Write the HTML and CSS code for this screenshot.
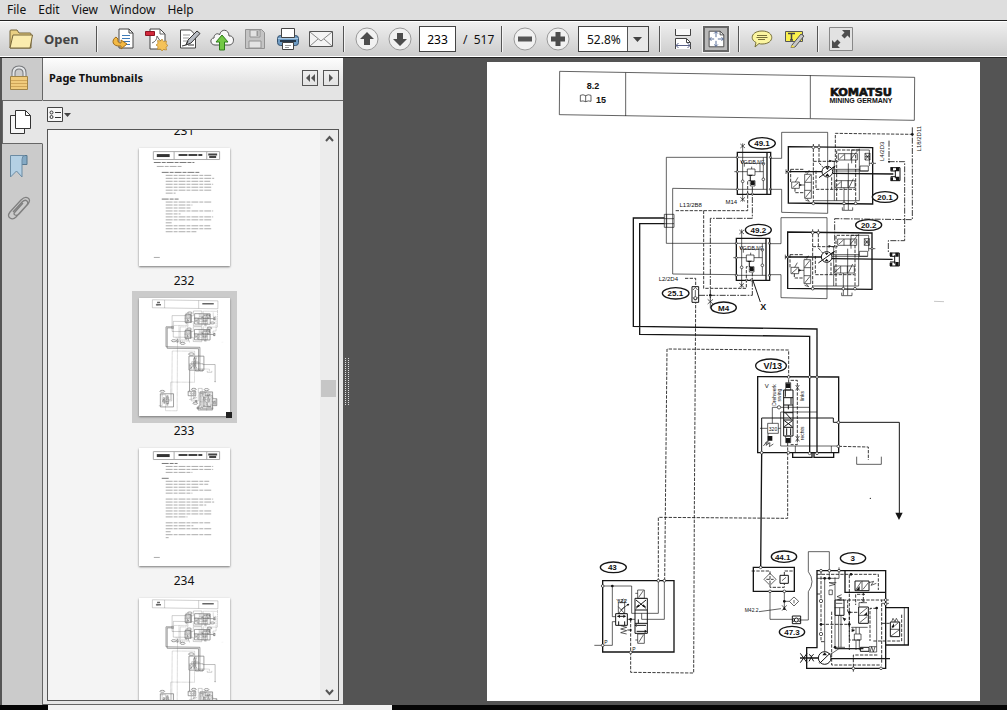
FILE: index.html
```html
<!DOCTYPE html>
<html lang="en">
<head>
<meta charset="utf-8">
<title>Document viewer</title>
<link rel="stylesheet" href="styles.css">
</head>
<body>
<div class="app">
  <nav class="menubar" aria-label="Main menu">
    <button class="menu">File</button>
    <button class="menu">Edit</button>
    <button class="menu">View</button>
    <button class="menu">Window</button>
    <button class="menu">Help</button>
  </nav>

  <header class="toolbar">
    <button class="open">
      <svg width="26" height="24" viewBox="0 0 26 24"><path d="M2 21V4q0-1 1-1h6l2 3h11q1 0 1 1v14z" fill="#e9cf83" stroke="#77663a"/><path d="M2 21 5 8h19.500L22 21z" fill="#fbecae" stroke="#77663a"/></svg>
      <span>Open</span>
    </button>
    <span class="sep"></span>
    <div class="group files">
      <button class="tool" aria-label="Convert"><svg viewBox="0 0 24 24"><path d="M8 2h10l4 4v15H8z" fill="#fff" stroke="#444"/><path d="M18 2v4h4" fill="none" stroke="#444"/><path d="M11 8.500h8M11 11.500h8M12 14.500h7M14 17.500h5" stroke="#3f7cb8"/><path d="M5 10C0 13 1 20 10 19v3l6-5-6-4v3q-4 0-3-4z" fill="#f3b944" stroke="#9c6c1c"/></svg></button>
      <button class="tool" aria-label="Create PDF"><svg viewBox="0 0 24 24"><path d="M6 2h10l5 5v15H6z" fill="#fff" stroke="#444"/><path d="M16 2v5h5M8 16q5-2 5-7 2 5 6 6" fill="none" stroke="#666"/><path d="M1.500 4.500h9v4h-9z" fill="#d2293c" stroke="#8e1422"/><path d="m18 12 1.500 2.500 3-.5-.5 3 2 1.500-2 1.500.5 3-3-.5L18 24l-1.500-2-3 .5.5-3-2-1.500 2-1.500-.5-3 3 .5z" fill="#f5c258" stroke="#b8862c" stroke-width=".7"/></svg></button>
      <button class="tool" aria-label="Sign"><svg viewBox="0 0 24 24"><path d="M3.500 3h10l5 5v13h-15z" fill="#fff" stroke="#444"/><path d="M6 8h7M6 11h6M6 14h4" stroke="#999"/><path d="m9 18 2-5L20 4l3 2.500L14 16z" fill="#b8bcc4" stroke="#333"/><path d="m5 19 4-1 2-4M11 18h6" fill="none" stroke="#333"/></svg></button>
      <button class="tool" aria-label="Upload"><svg viewBox="0 0 24 24"><path d="M5 18C0 18-.5 11 4 11 4 6 9 6 9.500 8 11 1 19 2 19 9c6-1 6 9 0 9z" fill="#f8f8f8" stroke="#555"/><path d="m12 8 6 7h-3.500v8h-5v-8H6z" fill="#72c844" stroke="#2f7c1c"/></svg></button>
      <button class="tool" aria-label="Save"><svg viewBox="0 0 24 24"><path d="M2.500 2.500h16l3 3v16h-19z" fill="#c4c4c4" stroke="#929292"/><path d="M7 3h10v7H7zM6 14h12v7H6z" fill="#e3e3e3" stroke="#929292"/><path d="M13.500 4h2v5h-2z" fill="#999"/></svg></button>
      <button class="tool" aria-label="Print"><svg viewBox="0 0 24 24"><rect x="1.500" y="8.500" width="21" height="10" rx="3" fill="#6f9cc4" stroke="#35516d"/><path d="M5.500 1.500h13v9h-13z" fill="#fff" stroke="#444"/><path d="M2 11.500h20" stroke="#a9c9e4"/><path d="M4 14h16" stroke="#26384a" stroke-width="2"/><path d="M6.500 15.500h11v7h-11z" fill="#fff" stroke="#444"/><path d="M9 18.500h6M9 20.500h4" stroke="#999"/></svg></button>
      <button class="tool" aria-label="Email"><svg viewBox="0 0 24 24"><path d="M.5 4.500h23v15H.5z" fill="#f4f4f4" stroke="#555"/><path d="m1 5 11 9L23 5M1 19l8-7M23 19l-8-7" fill="none" stroke="#888"/></svg></button>
    </div>
    <span class="sep"></span>
    <div class="group">
      <button class="tool" aria-label="Previous page"><svg viewBox="0 0 24 24"><circle cx="12" cy="12" r="11" fill="#f1f1f1" stroke="#999"/><path d="m12 5 7 7h-4v6H9v-6H5z" fill="#4d4d4d"/></svg></button>
      <button class="tool" aria-label="Next page"><svg viewBox="0 0 24 24"><circle cx="12" cy="12" r="11" fill="#f1f1f1" stroke="#999"/><path d="m12 19 7-7h-4V6H9v6H5z" fill="#4d4d4d"/></svg></button>
      <input class="pageno" aria-label="Page number" value="233">
      <span class="total">/&nbsp; 517</span>
    </div>
    <span class="sep"></span>
    <div class="group">
      <button class="tool" aria-label="Zoom out"><svg viewBox="0 0 24 24"><circle cx="12" cy="12" r="11" fill="#f1f1f1" stroke="#999"/><path d="M5 9.500h14v5H5z" fill="#555"/></svg></button>
      <button class="tool" aria-label="Zoom in"><svg viewBox="0 0 24 24"><circle cx="12" cy="12" r="11" fill="#f1f1f1" stroke="#999"/><path d="M9.500 5h5v4.500H19v5h-4.500V19h-5v-4.500H5v-5h4.500z" fill="#4d4d4d"/></svg></button>
      <div class="zoom">
        <select aria-label="Zoom level"><option>52.8%</option><option>100%</option></select>
        <svg class="zoomarrow" width="21" height="24" viewBox="0 0 21 24"><path d="M.5 0v24" stroke="#555"/><path d="M6 10h9l-4.500 5z" fill="#444"/></svg>
      </div>
    </div>
    <span class="sep"></span>
    <div class="group">
      <button class="tool" aria-label="Fit width"><svg viewBox="0 0 24 24"><path d="M4.500 2v6.500h15V2" fill="#f8f8f8" stroke="#444"/><path d="M4.500 22V11.500h11l4 4V22" fill="#fff" stroke="#444"/><path d="M15.500 11.500v4h4" fill="none" stroke="#444"/><path d="M5 18.500h14M7.500 16 5 18.500 7.500 21M16.500 16l2.500 2.500-2.500 2.500" fill="none" stroke="#5a6288"/></svg></button>
      <button class="tool pressed" aria-label="Fit page"><svg viewBox="0 0 24 24"><path d="M4.500 3.500h12l4 4v13h-16z" fill="#fff" stroke="#444"/><path d="M16.500 3.500v4h4" fill="none" stroke="#444"/><path d="M12 4v6M12 14v6M5 12h5M14 12h6M10 6l2-2 2 2M10 18l2 2 2-2M7 10l-2 2 2 2M18 10l2 2-2 2" fill="none" stroke="#4b6290"/></svg></button>
    </div>
    <span class="sep"></span>
    <div class="group">
      <button class="tool" aria-label="Comment"><svg viewBox="0 0 24 24"><path d="M12 4c13 0 13 13 0 13-1 0-2 0-3-.5L5 20l1-4.500C-1 12 2 4 12 4z" fill="#fbf5a0" stroke="#77703a"/><path d="M7 8.500h10M6.500 10.500h11M8 12.500h7" stroke="#77703a"/></svg></button>
      <button class="tool" aria-label="Highlight text"><svg viewBox="0 0 24 24"><path d="M2.500 4.500h17v10h-17z" fill="#faf04c" stroke="#555"/><path d="M5 6.500h7M8.500 7v6M7 13h3" stroke="#444" stroke-width="1.500"/><path d="M9 18 18 7l3 2-9 11-4 .5z" fill="#c7c7c7" stroke="#555"/><path d="m8 20.500 1-2.500 3 2z" fill="#fbe14a"/></svg></button>
    </div>
    <span class="sep"></span>
    <button class="tool" aria-label="Full screen"><svg viewBox="0 0 24 24"><path d="M.5.500h23v23H.5z" fill="#e2e2e2" stroke="#888"/><path d="M21 3v8l-2.500-2.500-3 3-3-3 3-3L13 3zM3 21v-8l2.500 2.500 3-3 3 3-3 3L11 21z" fill="#4d4d4d"/></svg></button>
  </header>

  <main class="workspace">
    <nav class="rail" aria-label="Panels">
      <button class="tab security" aria-label="Security"><svg width="24" height="28" viewBox="0 0 24 28"><path d="M6.500 12V8q0-5.500 5.500-5.500T17.500 8v4" fill="none" stroke="#77797c" stroke-width="4"/><path d="M6.500 12V8q0-5.500 5.500-5.500T17.500 8v4" fill="none" stroke="#e4e6e8" stroke-width="2"/><path d="M3.500 11.500h17v13h-17z" fill="#f0cb7c" stroke="#a08448"/><path d="M4 15.500h16M4 18.500h16M4 21.500h16" stroke="#cfa558"/></svg></button>
      <button class="tab active" aria-label="Page thumbnails"><svg width="24" height="26" viewBox="0 0 24 26"><path d="M2.500 6.500h14v18h-14z" fill="#f6f6f6" stroke="#333"/><path d="M7.500 1.500h10l5 5v13h-15z" fill="#fff" stroke="#333"/><path d="M17.500 1.500v5h5" fill="none" stroke="#333"/></svg></button>
      <button class="tab" aria-label="Bookmarks"><svg width="24" height="26" viewBox="0 0 24 26"><path d="M14 2.500h6v9h-6z" fill="#84a9c4" stroke="#57788f"/><path d="M3.500 2.500H18q-3 0-3 4V24l-5.500-6-6 6z" fill="#b4d0e4" stroke="#6b8ba3"/></svg></button>
      <button class="tab" aria-label="Attachments"><svg width="24" height="28" viewBox="0 0 24 28"><path d="M6 17 15 7q3-3 5-1t-1 5L9 22q-3 3-6 1t0-6L14 5q4-4 7-2t0 6l-9 10q-2 2-4 1t0-3l8-9" fill="none" stroke="#808080" stroke-width="1.300"/></svg></button>
    </nav>

    <aside class="panel">
      <div class="panelhead">
        <h2>Page Thumbnails</h2>
        <button class="mini" aria-label="Collapse"><svg width="14" height="14" viewBox="0 0 14 14"><path d="M7 3v8L3 7zM12 3v8L8 7z" fill="#555"/></svg></button>
        <button class="mini" aria-label="Expand"><svg width="14" height="14" viewBox="0 0 14 14"><path d="M5 3v8l4-4z" fill="#555"/></svg></button>
      </div>
      <div class="options">
        <button class="optbtn" aria-label="Options"><svg width="25" height="16" viewBox="0 0 25 16"><path d="M.5.500h15v14H.5z" fill="#f6f6f6" stroke="#444"/><circle cx="4.500" cy="5.500" r="1.500" fill="none" stroke="#333"/><circle cx="4.500" cy="10" r="1.500" fill="none" stroke="#333"/><path d="M8 5.500h6M8 10.500h6" stroke="#333"/><path d="M17 6h7l-3.500 4z" fill="#444"/></svg></button>
      </div>
      <div class="listbox">
        <div class="thumbs">
          <div class="caption">231</div>
          <button class="thumb">
            <svg class="sheet" viewBox="0 0 92 119">
              <path class="rule" d="M14.500 3.500h67v8h-67zM35.500 3.500v8M68.500 3.500v8"/>
              <path class="logo" d="M18 7.500h13"/>
              <path class="heavy" d="M40 7h24M70 6.500h9M71 9h7"/>
              <path class="para strong" d="M15 14.500h41M23 24.500h39M23 51.500h17"/>
              <path class="para" d="M18 18.500h26M27 27.500h47M27 30.500h49M27 33.500h45M27 36.500h48M27 39.500h47M27 42.500h46M27 45.500h10M27 54.500h46M27 57.500h27M27 60.500h26M27 63.500h48M27 66.500h15M27 69.500h48M27 72.500h47M27 75.500h6M27 78.500h45M27 81.500h46M27 84.500h31M15 110.500h6"/>
            </svg>
          </button>
          <div class="caption">232</div>
          <button class="thumb selected">
            <svg class="sheet mini-schematic" viewBox="0 0 1479 1917"><use href="#schematic"/></svg>
            <span class="marker"></span>
          </button>
          <div class="caption">233</div>
          <button class="thumb">
            <svg class="sheet" viewBox="0 0 92 119">
              <path class="rule" d="M14.500 3.500h67v8h-67zM35.500 3.500v8M68.500 3.500v8"/>
              <path class="logo" d="M18 7.500h13"/>
              <path class="heavy" d="M40 7h24M70 6.500h9M71 9h7"/>
              <path class="para strong" d="M23 15.500h16M23 30.500h7"/>
              <path class="para" d="M27 18.500h48M27 21.500h48M27 24.500h27M27 33.500h44M27 36.500h43M27 39.500h33M27 42.500h46M27 45.500h27M27 51.500h48M27 54.500h49M27 57.500h41M27 60.500h34M27 63.500h47M27 66.500h47M27 69.500h22M27 75.500h45M27 78.500h28M27 81.500h46M27 84.500h5M27 87.500h47M27 90.500h3M15 110.500h6"/>
            </svg>
          </button>
          <div class="caption">234</div>
          <button class="thumb">
            <svg class="sheet mini-schematic" viewBox="0 0 1479 1917"><use href="#schematic"/></svg>
          </button>
        </div>
        <div class="scroll">
          <button class="arrow" aria-label="Scroll up"><svg width="9" height="8" viewBox="0 0 9 8"><path d="M1 6 4.500 2 8 6" fill="none" stroke="#555" stroke-width="2"/></svg></button>
          <span class="before"></span>
          <span class="grab"></span>
          <span class="after"></span>
          <button class="arrow" aria-label="Scroll down"><svg width="9" height="8" viewBox="0 0 9 8"><path d="M1 2 4.500 6 8 2" fill="none" stroke="#555" stroke-width="2"/></svg></button>
        </div>
      </div>
    </aside>

    <div class="splitter"><svg width="4" height="48" viewBox="0 0 4 48"><path d="M.5 0v48M3.500 0v48" stroke="#ddd" stroke-dasharray="1 1"/></svg></div>

    <section class="viewer">
      <svg class="page" viewBox="0 0 1479 1917" role="img" aria-label="Hydraulic circuit diagram">
        <defs>
          <g id="block">
            <path class="bold" d="M337 97H437V223H337zM426 97V223"/>
            <path class="ln" d="M353 70V245M328 155H367M367 147H390V166H367zM390 155H415M415 112V208M337 112H426M337 208H426M376 170V182H390V198H376zM376 190H390M346 72 360 84M360 72 346 84M346 232 360 244M360 232 346 244M358 140V130H405V155M380 140V147"/>
            <path class="fill" d="M378 183h11v12h-11zM368 164l8 6 8-6z"/>
            <g class="port"><circle cx="353" cy="126" r="4"/><circle cx="353" cy="184" r="4"/><circle cx="415" cy="131" r="4"/><circle cx="415" cy="178" r="4"/><circle cx="337" cy="112" r="3"/><circle cx="337" cy="155" r="3"/><circle cx="337" cy="208" r="3"/><circle cx="436" cy="112" r="3"/><circle cx="436" cy="208" r="3"/><circle cx="368" cy="222" r="3"/><circle cx="382" cy="222" r="3"/></g>
          </g>
          <g id="pump">
            <path class="ln" d="M0 115H35V37H173V280L35 277V208H0"/>
            <path class="bold" d="M55 80 308 83V252L55 249z"/>
            <circle class="med paper" cx="172" cy="155" r="16"/>
            <path class="bold" d="M48 155H156M188 160 370 162"/>
            <path class="med" d="M147 173 196 138"/>
            <path class="ln" d="M48 148V162M188 148H270M188 153H295M270 138H295V153H270zM193 125V242M130 242H268V86M205 101H262V120H205zM224 101V120M243 101V120M208 117 222 104M243 117 262 93M195 182H255V203H195zM214 182V203M234 182V203M197 200 212 186M238 201 250 176M104 163H124V235H104zM104 187H124M104 211H124M106 185 122 165M106 233 122 213M65 186H88V205H65zM68 203 85 188M76 186 84 172M88 195H104M110 163 118 152 106 158M110 235 118 244 106 240M222 203V270M235 130V270M217 262V271H248V262M245 130V90H298V138M285 100H300V120H285zM285 100 300 120M300 100 285 120M298 130H318M285 110H300M196 125 178 122"/>
            <path class="dash" d="M130 72V252M147 72V128L160 143M130 124H205M62 148V190M62 148H104M75 205V218H104M138 152V208H255M257 105V252M185 172V208M268 90H200V242"/>
            <path class="fill" d="M166 142h12l-6 8zM166 168h12l-6-8zM186 142l10-4-4 9zM88 191l8 4-8 4zM361 142h8v10h-8zM361 172h8v10h-8zM378 142h10v12h-10zM378 170h10v12h-10zM178 119l8 4-8 4z"/>
            <path class="med" d="M362 143H390V182H362M376 150V175M362 153H378M362 170H378"/>
            <g class="port"><circle cx="130" cy="82" r="4"/><circle cx="147" cy="82" r="4"/><circle cx="130" cy="250" r="4"/><circle cx="222" cy="250" r="4"/><circle cx="257" cy="250" r="4"/><circle cx="308" cy="130" r="3"/><circle cx="55" cy="155" r="3"/></g>
          </g>
        </defs>
        <g id="schematic">
          <g transform="translate(189 -6)">
            <path class="ln" d="M29 34 1094 52 1093 181 28 164zM227 38V168M781 46V175"/>
            <path class="mark" d="M840 98H1026M105 80H152M90 116H168"/>
            <path class="ln" d="M91 106q8-4 16 1 8-5 16-1v18q-8-3-16 1-8-4-16-1zM107 107v18"/>
          </g>
          <g transform="translate(414 174)">
            <path class="ln" d="M337 112H124V370H337M337 208 143 205V462L337 464M118 283H147V322H118zM125 283V322M118 296H147M118 311H147"/>
            <path class="bold" d="M118 294H25V619L576 627V1000M118 311H44V643L554 649V1000"/>
            <path class="dash" d="M152 272H368V182H378M236 272V505H364V440H376M180 475H212V500"/>
            <path class="dotdash" d="M382 200V295H256V540M222 526H382V458"/>
            <path class="med" d="M201 500H221V547H201zM384 482 406 546"/>
            <path class="ln" d="M204 510 211 502 218 510M204 532 211 540 218 532M211 510V530M248 538 264 552M264 538 248 552M256 530V565"/>
            <circle class="ln" cx="211" cy="535" r="5"/>
            <circle class="fill" cx="256" cy="526" r="4"/>
            <use href="#block"/><use href="#block" x="-3" y="258"/>
            <g class="tag"><ellipse cx="411" cy="70" rx="40" ry="17"/><ellipse cx="400" cy="330" rx="39" ry="17"/><ellipse cx="152" cy="520" rx="40" ry="17"/><ellipse cx="296" cy="563" rx="38" ry="17"/></g>
          </g>
          <g transform="translate(849 174)">
            <use href="#pump"/><use href="#pump" x="-2" y="256"/>
            <path class="dash" d="M196 125V40L427 43"/>
            <path class="dotdash" d="M427 22V299L194 296V380M357 62V125H404V362H355V400"/>
            <circle class="fill" cx="427" cy="43" r="4"/><circle class="fill" cx="357" cy="125" r="3"/>
            <path class="faint" d="M492 544 522 545"/>
            <g class="tag"><ellipse cx="345" cy="231" rx="38" ry="16"/><ellipse cx="296" cy="315" rx="39" ry="16"/></g>
          </g>
          <g transform="translate(759 834)">
            <path class="bold" d="M53 110 296 111V338H53zM158 338V352H216V338M222 338V352H281V338M65 338 62 682"/>
            <path class="dash" d="M146 128V30L-219 27-226 722M143 308V535L-245 532V722M296 319 385 321V360M152 121H172V314H152"/>
            <path class="med" d="M65 338V234H280V247H478V520"/>
            <path class="fill" d="M466 518h22l-11 22zM138 130h13v14h-13zM138 294h13v14h-13zM83 288h14v14h-14z"/>
            <path class="ln" d="M350 350V373H424V350M97 250V202H209M60 265H82M83 250H115V280H83zM115 265H122M122 318V216H231M122 318H296M166 338V318M274 338V318M137 128H152V150H137zM137 288H152V308H137zM84 280V312M75 310 82 304 78 316 90 308 88 320 100 312M70 318 78 308M167 135 178 151M178 135 167 151M167 288 178 304M178 288 167 304"/>
            <path class="med" d="M131 150H159V288H131zM131 173H159M131 195H159M131 218H159M131 240H159M131 262H159M133 260 157 242M157 260 133 242M136 150V170M153 173V193M145 195V208M136 218 154 238M140 265V285M152 265V285"/>
            <g class="port"><circle cx="117" cy="202" r="5"/><circle cx="146" cy="111" r="4"/><circle cx="209" cy="111" r="4"/><circle cx="231" cy="111" r="4"/><circle cx="65" cy="338" r="4"/><circle cx="145" cy="338" r="4"/><circle cx="209" cy="340" r="4"/><circle cx="231" cy="340" r="4"/><circle cx="295" cy="247" r="4"/><circle cx="295" cy="319" r="4"/></g>
            <circle class="fill" cx="391" cy="475" r="2"/>
            <g class="tag"><ellipse cx="93" cy="77" rx="46" ry="20"/></g>
          </g>
          <g transform="translate(309 1344)">
            <path class="bold" d="M38 212H252V426H38z"/>
            <path class="ln" d="M34 228H125V310H205V212M67 228V320H77M13 406H67V335H77M223 212V328H155V310M112 328H135M85 278H104V311H85zM85 311 104 290M85 290 104 311M92 300 116 282M92 347 110 352 92 357 110 362 92 368 110 372M143 240H163V265H143zM146 262 160 242M143 372H163V400H143zM146 397 160 375M136 250H143M136 390H143M85 268 92 278 100 266M105 268V278"/>
            <path class="med" d="M135 265H172V370H135zM135 300H172M135 340H172M138 295 168 270M138 270 168 295M140 346H168M140 364H168M145 340V328M77 311H112V346H77zM82 319H106M86 346V334M104 346V334"/>
            <path class="fill" d="M100 314l8 5-8 5zM90 314l-8 5 8 5zM138 291l8-8 2 8zM168 291l-8-8-2 8zM164 359l8 5-8 5zM110 282l8 0-4 7zM140 341l-6 5 6 5z"/>
            <path class="dash" d="M122 328V487L311 489 313 0 317-622M122 360H112"/>
            <circle class="fill" cx="67" cy="228" r="4"/><circle class="fill" cx="122" cy="328" r="4"/><circle class="fill" cx="122" cy="360" r="3"/>
            <g class="port"><circle cx="38" cy="228" r="4"/><circle cx="38" cy="406" r="4"/><circle cx="122" cy="427" r="4"/><circle cx="205" cy="212" r="4"/><circle cx="223" cy="212" r="4"/></g>
            <g class="tag"><ellipse cx="70" cy="172" rx="39" ry="16"/></g>
          </g>
          <g transform="translate(744 1434)">
            <path class="bold" d="M55 82H178V154H55z"/>
            <path class="ln" d="M105 100 123 118 105 136 87 118zM105 154V238H172M148 154V210M177 171 191 184 177 198 163 184zM148 184H163M72 215 138 206M141 196 155 212M155 196 141 212M198 240H220V155Q242 125 220 95V35H283V115M141 122 153 112M177 190V180"/>
            <path class="med" d="M135 106H160V130H135zM172 228H197V251H172zM178 234 172 240 178 246M191 234 197 240 191 246"/>
            <circle class="med" cx="184" cy="240" r="6"/>
            <path class="dash" d="M50 93H105V142H148V130M148 106V93H175M94 118H116"/>
            <path class="bold" d="M246 92H452V385H215V323H246zM452 203H520V315H452M330 92V157H452M195 354H250M288 356H465"/>
            <path class="ln" d="M508 203V315M269 115V335M246 115H312V82M299 203H328M314 203V226M303 190H322M306 180 320 174 306 170 320 164M311 226V322M318 226V322M299 322H330M300 112V322M282 128H304M282 128 300 133 282 138M282 150H292V164H282zM370 226H400M374 222 396 204M374 248 396 230M372 200V188H396M378 188 388 184 378 178M381 123V152M362 150 378 126M384 148 400 128M402 128 416 124 408 136 424 130M350 262H398M350 262 358 270M358 282H378V300H358zM363 262V282M373 262V282M363 300V330M373 300V330M288 342 312 326H385M402 320H425V336H402M405 336 410 320 415 336 420 320M465 268H495M468 288 492 270M470 265 490 248M470 245 474 235 480 245 484 235 490 245M438 180H462M440 190H462M425 204V320M270 340 252 368M288 340 262 372"/>
            <path class="dash" d="M258 95V305H270M246 103H430V150M258 253H343V300H375M343 105V253M343 217H370M385 157V185M390 163H362V195M310 180H440V370M440 250H465M415 303H500V220M290 215V375H440M355 395V345H430M246 162H258M343 215V330M425 205H405V303M338 180V215"/>
            <path class="med" d="M360 123H402V152H360zM371 201H400V250H371zM300 180H327V226H300zM466 246H494V290H466zM376 322H402V334H376zM300 326H385"/>
            <circle class="med paper" cx="269" cy="354" r="19"/>
            <path class="med" d="M254 370 285 340M196 340 216 368M216 340 196 368M222 343 230 350 222 364M236 343 228 350 236 364"/>
            <path class="fill" d="M262 346l7-9 7 9zM386 226l10-10v10zM364 150l10-12v12zM469 262l8-12v12zM322 232l12 4-6 8zM350 266l10 6-10 4zM148 200l-5 9h10z"/>
            <g class="port"><circle cx="258" cy="183" r="5"/><circle cx="258" cy="282" r="5"/><circle cx="77" cy="82" r="4"/><circle cx="105" cy="154" r="4"/><circle cx="148" cy="154" r="4"/><circle cx="283" cy="92" r="4"/><circle cx="312" cy="92" r="4"/><circle cx="258" cy="92" r="4"/><circle cx="452" cy="180" r="4"/><circle cx="452" cy="192" r="4"/><circle cx="355" cy="385" r="4"/><circle cx="438" cy="385" r="4"/></g>
            <g class="fill"><circle cx="269" cy="115" r="4"/><circle cx="283" cy="115" r="4"/><circle cx="348" cy="103" r="4"/><circle cx="343" cy="217" r="4"/><circle cx="343" cy="253" r="4"/><circle cx="300" cy="322" r="4"/><circle cx="148" cy="184" r="4"/><circle cx="258" cy="253" r="4"/><circle cx="425" cy="204" r="4"/></g>
            <g class="tag"><ellipse cx="147" cy="50" rx="38" ry="17"/><ellipse cx="354" cy="55" rx="38" ry="17"/><ellipse cx="171" cy="276" rx="38" ry="17"/></g>
          </g>
        </g>
        <g class="words">
          <g transform="translate(189 -6)">
            <text class="t27" x="129" y="88">8.2</text><text class="t27" x="153" y="129">15</text>
            <text class="brand" x="933" y="109">KOMATSU</text><text class="sub" x="933" y="130">MINING GERMANY</text>
          </g>
          <g transform="translate(414 174)">
            <text class="t24" x="411" y="79">49.1</text><text class="t24" x="400" y="339">49.2</text><text class="t24" x="151" y="528">25.1</text><text class="t24" x="296" y="572">M4</text><text class="t27" x="415" y="571">X</text>
            <text class="t18" x="319" y="253">M14</text><text class="t18" x="197" y="262">L13/2B8</text><text class="t18" x="130" y="483">L2/2D4</text>
            <text class="t12" x="382" y="133">VG/DB,NC</text><text class="t12" x="379" y="391">VG/DB,NC</text>
          </g>
          <g transform="translate(849 174)">
            <text class="t24" x="345" y="240">20.1</text><text class="t24" x="296" y="324">20.2</text>
            <text class="t18" transform="translate(342 94) rotate(-90)">L4/2D3</text><text class="t18" transform="translate(453 56) rotate(-90)">L18/2D11</text>
          </g>
          <g transform="translate(759 834)">
            <text class="t27" x="98" y="86">V/13</text><text class="t18" x="80" y="143">V</text>
            <text class="t12" transform="translate(109 165) rotate(-90)">Drehwerk</text><text class="t12" transform="translate(124 165) rotate(-90)">swing</text><text class="t12" transform="translate(192 168) rotate(-90)">links</text><text class="t12" transform="translate(192 280) rotate(-90)">rechts</text><text class="t12" x="99" y="272">320</text>
          </g>
          <g transform="translate(309 1344)">
            <text class="t24" x="67" y="180">43</text><text class="t18" x="95" y="278">Y32</text><text class="t12" x="48" y="403">P</text><text class="t12" x="132" y="422">P</text>
          </g>
          <g transform="translate(744 1434)">
            <text class="t24" x="143" y="59">44.1</text><text class="t24" x="353" y="64">3</text><text class="t24" x="171" y="285">47.3</text><text class="t12" x="50" y="217">M42.2</text>
          </g>
        </g>
      </svg>
    </section>
  </main>
  <footer class="status"><span class="statuspad"></span><span class="statusbar"></span></footer>
</div>
</body>
</html>
```
FILE: styles.css
```css
* { box-sizing: border-box; }
body { margin: 0; font-family: "Noto Sans", "Open Sans", sans-serif; font-size: 12px; color: #111; }
button { margin: 0; padding: 0; border: 0; background: none; font: inherit; color: inherit; }
svg { display: block; }

.app { display: flex; flex-direction: column; height: 100vh; overflow: hidden; background: #000; }

.menubar { display: flex; flex: none; height: 20px; gap: 12px; padding: 0 7px; background: #dedede; }
.menu { line-height: 18px; }

.toolbar { display: flex; flex: none; align-items: center; height: 38px; border-top: 1px solid #222; border-bottom: 1px solid #222; box-shadow: inset 0 1px #fff, inset 0 -1px #fff; background: linear-gradient(#f0f0f0, #cbcbcb); }
.open { display: flex; align-items: center; gap: 10px; width: 90px; padding-left: 8px; font-size: 13px; font-weight: 700; color: #444; }
.sep { flex: none; width: 2px; height: 26px; margin: 0 5px 0 6px; border-left: 1px solid #555; border-right: 1px solid #f4f4f4; }
.group { display: flex; align-items: center; }
.files { padding-left: 3px; }
.tool { display: flex; align-items: center; justify-content: center; width: 33px; height: 26px; }
.tool svg { width: 24px; height: 24px; }
.pressed { width: 26px; margin: 0 3px 0 4px; border: 2px solid #666; background: #b9b9b9; outline: 1px solid #f4f4f4; }
.pageno { width: 37px; height: 26px; margin-left: 3px; padding: 0; border: 1px solid #444; background: #fff; font: inherit; text-align: center; }
.total { width: 39px; padding-left: 7px; white-space: nowrap; }
.zoom { position: relative; margin: 0 4px; }
.zoom select { appearance: none; display: block; width: 71px; height: 26px; padding: 0 0 0 8px; border: 1px solid #444; border-radius: 0; background: linear-gradient(90deg, #fff 49px, #e8e8e8 49px); font: inherit; color: #111; }
.zoomarrow { position: absolute; right: 1px; top: 1px; pointer-events: none; }

.workspace { display: flex; flex: 1; min-height: 0; background: #545454; }
.rail { display: flex; flex: none; flex-direction: column; width: 43px; border-left: 2px solid #555; background: #cbcbcb; }
.tab { display: flex; flex: none; align-items: center; justify-content: center; height: 43px; padding-right: 6px; border-right: 1px solid #666; }
.rail::after { content: ""; flex: 1; border-right: 1px solid #666; }
.security { height: 42px; }
.active { height: 44px; border: 1px solid #666; border-right-color: #e6e6e6; background: #e6e6e6; }

.panel { display: flex; flex: none; flex-direction: column; width: 300px; padding-bottom: 3px; background: #e6e6e6; border-bottom: 1px solid #666; }
.panelhead { display: flex; flex: none; align-items: center; gap: 5px; height: 43px; padding: 0 4px 3px 6px; border-bottom: 1px solid #666; background: linear-gradient(#fdfdfd, #e4e4e4 60%); }
.panelhead h2 { flex: 1; margin: 0; font-size: 11px; font-weight: 700; }
.mini { display: flex; align-items: center; justify-content: center; width: 16px; height: 16px; border: 1px solid #555; }
.options { display: flex; flex: none; align-items: center; height: 28px; padding-left: 4px; }
.listbox { display: flex; flex: 1; min-height: 0; margin: 0 4px; border: 1px solid #555; background: #f4f4f4; overflow: hidden; }
.thumbs { display: flex; flex: 1; flex-direction: column; align-items: center; margin-top: -7px; overflow: hidden; }
.caption { flex: none; height: 18px; line-height: 16px; }
.thumb { position: relative; flex: none; height: 132px; padding: 7px; }
.selected { background: #cbcbcb; }
.sheet { width: 91px; height: 118px; background: #fff; box-shadow: 0 1px 2px #777; }
.marker { position: absolute; right: 5px; bottom: 5px; width: 6px; height: 6px; background: #222; }
.scroll { display: flex; flex: none; flex-direction: column; width: 18px; background: #ececec; }
.arrow { display: flex; flex: none; align-items: center; justify-content: center; height: 17px; }
.before { flex: 234; }
.grab { flex: none; height: 17px; margin: 0 2px 0 1px; background: #c6c6c6; }
.after { flex: 287; }
.splitter { display: flex; flex: none; align-items: center; justify-content: center; width: 7px; }

.viewer { display: flex; flex: 1; min-width: 0; justify-content: flex-end; padding: 4px 27px 4px 0; }
.page { height: 100%; aspect-ratio: 1479 / 1917; background: #fff; }

.status { display: flex; flex: none; height: 5px; background: #050505; }
.statuspad { flex: none; width: 48px; }
.statusbar { width: 344px; background: #f2f2f2; }

.page { --thin: 2; --mid: 3; --thick: 4; --mark: 0; --dashed: 2.5; --ink: #151515; }
.mini-schematic { --thin: 5; --mid: 7; --thick: 10; --mark: 24; --dashed: 5; --ink: #666; }
.ln, .dash, .dotdash { fill: none; stroke: var(--ink); stroke-width: var(--thin); }
.dash { stroke-dasharray: 10 4; stroke-width: var(--dashed); }
.dotdash { stroke-dasharray: 18 4 5 4; stroke-width: var(--dashed); }
.med { fill: none; stroke: var(--ink); stroke-width: var(--mid); }
.bold { fill: none; stroke: var(--ink); stroke-width: var(--thick); }
.paper { fill: #fff; }
.fill { fill: var(--ink); }
.port circle { fill: #fff; stroke: var(--ink); stroke-width: 2; }
.tag ellipse { fill: #fff; stroke: var(--ink); stroke-width: var(--thick); }
.faint { stroke: #aaa; stroke-width: 2; }
.mark { fill: none; stroke: var(--ink); stroke-width: var(--mark); }
.words { font-family: "Liberation Sans", sans-serif; fill: #111; text-anchor: middle; }
.t27 { font-size: 27px; font-weight: 700; }
.t24 { font-size: 24px; font-weight: 700; }
.t18 { font-size: 18px; }
.t12 { font-size: 15px; }
.brand { font-family: "DejaVu Sans", sans-serif; font-size: 34px; font-weight: 700; stroke: #111; stroke-width: 2; }
.sub { font-size: 21px; font-weight: 700; }
.rule { fill: none; stroke: #aaa; stroke-width: 1; }
.logo { stroke: #333; stroke-width: 3; }
.heavy { stroke: #444; stroke-width: 2; stroke-dasharray: 9 1; }
.para { stroke: #aaa; stroke-width: 1; stroke-dasharray: 7 1 4 1; }
.strong { stroke: #777; }
```
